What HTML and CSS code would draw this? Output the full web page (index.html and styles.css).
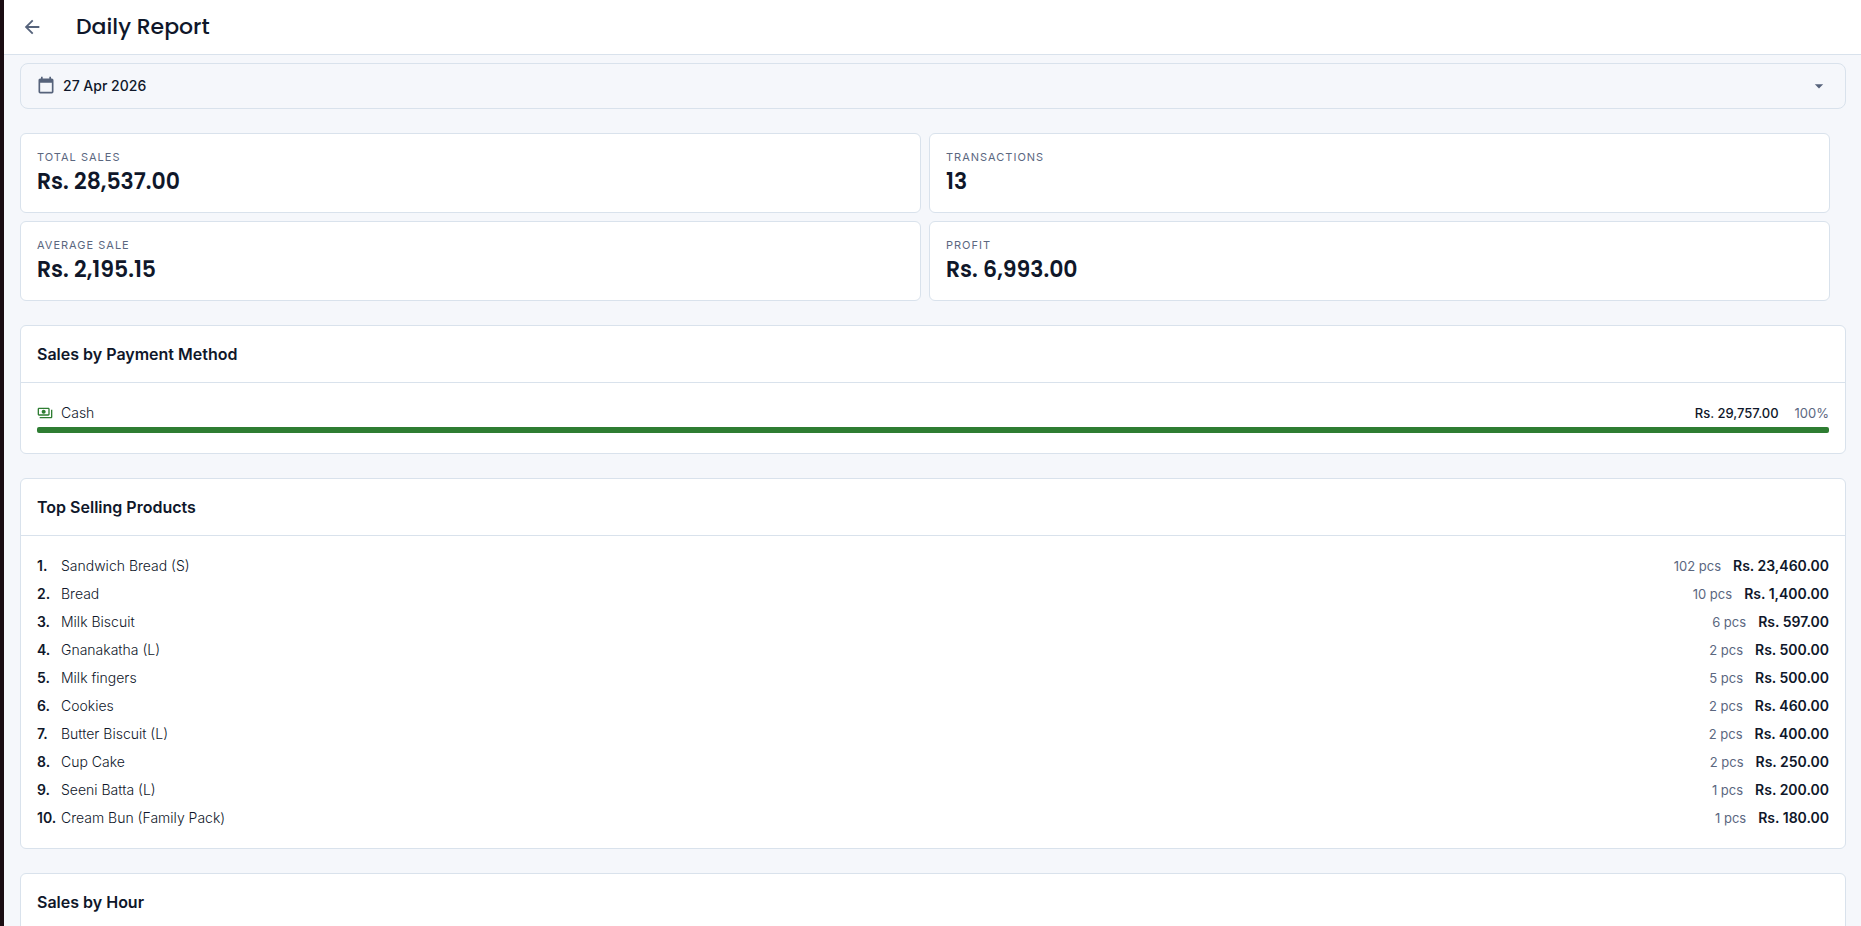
FILE: index.html
```html
<!DOCTYPE html>
<html lang="en">
<head>
    <meta charset="UTF-8">
    <meta name="viewport" content="width=device-width, initial-scale=1.0">
    <title>Daily Report</title>
    <link rel="stylesheet" href="styles.css">
</head>
<body>

    <header class="header">
        <button type="button" class="back-btn" aria-label="Back">
            <svg width="22" height="22" viewBox="0 0 24 24"><path d="M20,11V13H8L13.5,18.5L12.08,19.92L4.16,12L12.08,4.08L13.5,5.5L8,11H20Z"/></svg>
        </button>
        <h1>Daily Report</h1>
    </header>

    <main class="content">
        <div class="date-picker">
            <svg width="20" height="20" viewBox="0 0 24 24"><path d="M19,19H5V8H19M16,1V3H8V1H6V3H5C3.89,3 3,3.89 3,5V19A2,2 0 0,0 5,21H19A2,2 0 0,0 21,19V5C21,3.89 20.1,3 19,3H18V1"/></svg>
            <select class="date-select" aria-label="Report date">
                <option selected>27 Apr 2026</option>
            </select>
            <svg width="20" height="20" viewBox="0 0 24 24"><path d="M7,10L12,15L17,10H7Z"/></svg>
        </div>

        <div class="stats">
            <div class="stat-card">
                <div class="stat-label">TOTAL SALES</div>
                <div class="stat-value">Rs. 28,537.00</div>
            </div>
            <div class="stat-card">
                <div class="stat-label">TRANSACTIONS</div>
                <div class="stat-value">13</div>
            </div>
            <div class="stat-card">
                <div class="stat-label">AVERAGE SALE</div>
                <div class="stat-value">Rs. 2,195.15</div>
            </div>
            <div class="stat-card">
                <div class="stat-label">PROFIT</div>
                <div class="stat-value">Rs. 6,993.00</div>
            </div>
        </div>

        <section class="card">
            <h2>Sales by Payment Method</h2>
            <div class="card-body">
                <div class="payment-row">
                    <svg class="cash-icon" width="16" height="16" viewBox="0 0 24 24"><path d="M19 14V6c0-1.1-.9-2-2-2H3c-1.1 0-2 .9-2 2v8c0 1.1.9 2 2 2h14c1.1 0 2-.9 2-2zm-2 0H3V6h14v8zm-7-7c-1.66 0-3 1.34-3 3s1.34 3 3 3 3-1.34 3-3-1.34-3-3-3zm13 0v11c0 1.1-.9 2-2 2H4v-2h17V7h2z"/></svg>
                    <span class="name">Cash</span>
                    <span class="payment-amount">Rs. 29,757.00</span>
                    <span class="percent">100%</span>
                </div>
                <div class="bar">
                    <div class="bar-fill" style="width: 100%"></div>
                </div>
            </div>
        </section>

        <section class="card">
            <h2>Top Selling Products</h2>
            <ol class="card-body products">
                <li><span class="rank">1.</span><span class="name">Sandwich Bread (S)</span><span class="qty">102 pcs</span><span class="amount">Rs. 23,460.00</span></li>
                <li><span class="rank">2.</span><span class="name">Bread</span><span class="qty">10 pcs</span><span class="amount">Rs. 1,400.00</span></li>
                <li><span class="rank">3.</span><span class="name">Milk Biscuit</span><span class="qty">6 pcs</span><span class="amount">Rs. 597.00</span></li>
                <li><span class="rank">4.</span><span class="name">Gnanakatha (L)</span><span class="qty">2 pcs</span><span class="amount">Rs. 500.00</span></li>
                <li><span class="rank">5.</span><span class="name">Milk fingers</span><span class="qty">5 pcs</span><span class="amount">Rs. 500.00</span></li>
                <li><span class="rank">6.</span><span class="name">Cookies</span><span class="qty">2 pcs</span><span class="amount">Rs. 460.00</span></li>
                <li><span class="rank">7.</span><span class="name">Butter Biscuit (L)</span><span class="qty">2 pcs</span><span class="amount">Rs. 400.00</span></li>
                <li><span class="rank">8.</span><span class="name">Cup Cake</span><span class="qty">2 pcs</span><span class="amount">Rs. 250.00</span></li>
                <li><span class="rank">9.</span><span class="name">Seeni Batta (L)</span><span class="qty">1 pcs</span><span class="amount">Rs. 200.00</span></li>
                <li><span class="rank">10.</span><span class="name">Cream Bun (Family Pack)</span><span class="qty">1 pcs</span><span class="amount">Rs. 180.00</span></li>
            </ol>
        </section>

        <section class="card">
            <h2>Sales by Hour</h2>
        </section>
    </main>

</body>
</html>
```
FILE: styles.css
```css
* {
    box-sizing: border-box;
}

body {
    margin: 0;
    height: 100vh;
    display: flex;
    flex-direction: column;
    border-left: 4px solid #1a0d12;
    background-color: #f5f7fb;
    color: #0f172a;
    font-family: Inter, sans-serif;
    font-size: 14px;
    line-height: 20px;
    overflow: hidden;
}

h1, h2, ol {
    margin: 0;
    padding: 0;
}

svg {
    display: block;
    flex-shrink: 0;
    fill: #56637b;
}

.header {
    flex-shrink: 0;
    display: flex;
    align-items: center;
    gap: 28px;
    height: 55px;
    padding: 0 12px;
    background-color: #fff;
    border-bottom: 1px solid #d9e2ec;
}

.header h1 {
    font-family: Poppins, Inter, sans-serif;
    font-size: 22px;
    font-weight: 500;
    line-height: 28px;
}

.back-btn {
    padding: 5px;
    border: none;
    background: none;
    cursor: pointer;
}

.content {
    flex: 1;
    overflow: hidden;
    padding: 8px 15px 24px 16px;
}

.date-picker {
    display: flex;
    align-items: center;
    gap: 7px;
    height: 46px;
    padding: 0 16px 0 15px;
    border: 1px solid #d9e2ec;
    border-radius: 8px;
}

.date-select {
    flex: 1;
    appearance: none;
    padding: 0;
    border: none;
    background: none;
    color: inherit;
    font: inherit;
    font-weight: 500;
}

.stats {
    display: grid;
    grid-template-columns: 1fr 1fr;
    gap: 8px;
    margin: 24px 16px 24px 0;
}

.stat-card {
    height: 80px;
    padding: 15px 16px;
    background-color: #fff;
    border: 1px solid #d9e2ec;
    border-radius: 6px;
}

.stat-label {
    color: #5b677f;
    font-size: 11px;
    line-height: 16px;
    letter-spacing: 1px;
}

.stat-value {
    font-family: Poppins, Inter, sans-serif;
    font-size: 22px;
    font-weight: 600;
    line-height: 34px;
}

.card {
    margin-bottom: 24px;
    background-color: #fff;
    border: 1px solid #d9e2ec;
    border-radius: 6px;
}

.card h2 {
    padding: 16px;
    border-bottom: 1px solid #d9e2ec;
    font-size: 16px;
    font-weight: 600;
    line-height: 24px;
}

.card-body {
    padding: 16px;
}

.payment-row, .products li {
    display: flex;
    align-items: center;
    height: 28px;
}

.cash-icon {
    margin-right: 8px;
    fill: #2e7d32;
}

.name {
    flex: 1;
    font-weight: 300;
}

.payment-amount {
    font-size: 13px;
    font-weight: 500;
}

.percent {
    margin-left: 16px;
    color: #5b677f;
    font-size: 13px;
}

.bar {
    height: 6px;
    margin-bottom: 4px;
    border-radius: 2px;
    background-color: #e2e8f0;
    overflow: hidden;
}

.bar-fill {
    height: 100%;
    background-color: #2e7d32;
}

.rank {
    width: 24px;
    font-weight: 600;
}

.qty {
    margin-right: 12px;
    color: #5b677f;
    font-size: 13px;
}

.amount {
    font-weight: 600;
}
```
